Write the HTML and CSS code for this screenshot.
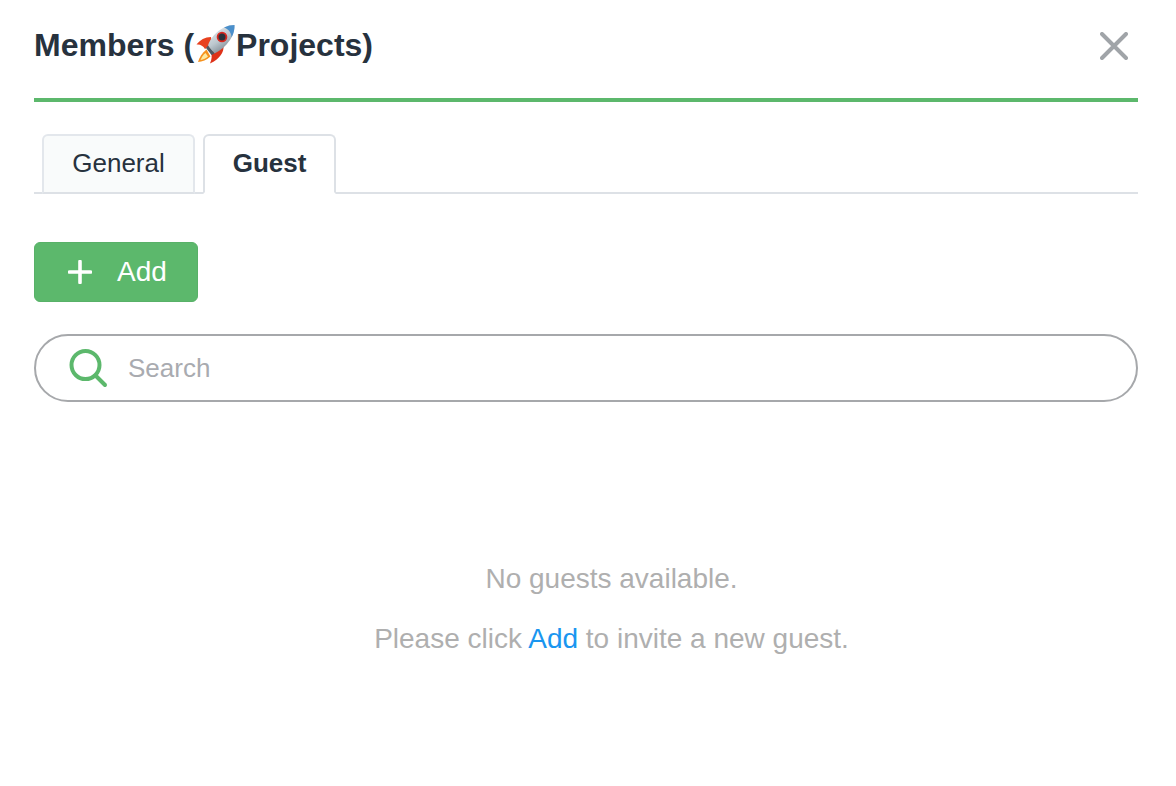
FILE: index.html
```html
<!DOCTYPE html>
<html lang="en">
<head>
<meta charset="utf-8">
<title>Members</title>
<link rel="stylesheet" href="styles.css">
</head>
<body>
<div class="modal">
  <header class="modal-header">
    <h1 class="modal-title">Members (<svg class="rocket" viewBox="0 0 42 40" aria-hidden="true">
      <defs>
        <linearGradient id="body" x1="0.2" y1="0" x2="0.8" y2="1">
          <stop offset="0" stop-color="#e6ebee"/>
          <stop offset="0.5" stop-color="#bcc7ce"/>
          <stop offset="1" stop-color="#66717b"/>
        </linearGradient>
      </defs>
      <path d="M17 13 C11 13 6 16 2.500 20.500 C6 20 9 21.500 11 25 L18 20Z" fill="#e8411f"/>
      <path d="M29.500 22 C30 28 26 35 16 39.500 C18 35 18 32 17 28Z" fill="#de3219"/>
      <path d="M12.500 25.500 C8 29 5.500 33 4 38 C8 37.500 13 36 16.500 32.500Z" fill="#f6921e"/>
      <path d="M11.500 29 C9 31 7.500 33.500 6.500 36 C9.500 35.500 12 34.500 14 32.500Z" fill="#fde9a0"/>
      <path d="M14 21.500 C16 15 22 7.500 30 3.500 C33.500 1.800 37 1 40.500 1 C40.700 5 39.500 11 36 16 C32 22 26.500 26.500 20.500 29.500Z" fill="url(#body)"/>
      <path d="M30 3.500 C33.500 1.800 37 1 40.500 1 C40.700 5 39.800 9.500 37.500 13.500 C37.500 9 35 5.500 30 3.500Z" fill="#4a8fcb"/>
      <circle cx="28" cy="13" r="5.300" fill="#d9281f"/>
      <circle cx="28" cy="13" r="3.500" fill="#2a333c"/>
      <path d="M14 21.500 L20.500 29.500 L17.500 31 L12 24Z" fill="#4f5962"/>
    </svg>Projects)</h1>
    <button class="close" type="button" aria-label="Close">
      <svg viewBox="0 0 28 28" class="close-icon"><path d="M2 2 L26 26 M26 2 L2 26"/></svg>
    </button>
  </header>

  <nav class="tabs">
    <a class="tab">General</a>
    <a class="tab tab-active">Guest</a>
  </nav>

  <button class="add-btn" type="button">
    <svg viewBox="0 0 24 24" class="plus"><path d="M12 1.500 V22.500 M1.500 12 H22.500"/></svg>
    <span>Add</span>
  </button>

  <label class="search">
    <svg viewBox="0 0 40 40" class="search-icon">
      <circle cx="17.500" cy="16.100" r="14"/>
      <path d="M27.500 26.500 L37 36"/>
    </svg>
    <span class="placeholder">Search</span>
  </label>

  <section class="empty">
    <p class="empty-line">No guests available.</p>
    <p class="empty-line">Please click <a class="link">Add</a> to invite a new guest.</p>
  </section>
</div>
</body>
</html>
```
FILE: styles.css
```css
* { box-sizing: border-box; }
html, body { margin: 0; height: 100%; background: #fff; }
body { font-family: "Liberation Sans", Arial, sans-serif; color: #27323e; overflow: hidden; }

.modal { padding: 0 38px 0 34px; }

.modal-header {
  height: 102px;
  border-bottom: 4px solid #5cb86c;
  display: flex;
  justify-content: space-between;
  padding-top: 24px;
}
.modal-title {
  margin: 0;
  font-size: 32px;
  line-height: 42px;
  font-weight: 700;
  display: flex;
  align-items: center;
  height: 42px;
}
.rocket { width: 42px; height: 40px; margin: -2px 0 0 0; }

.close {
  border: 0; padding: 0; background: none;
  width: 28px; height: 28px;
  margin: 8px 10px 0 0;
}
.close-icon { display: block; width: 28px; height: 28px; fill: none; stroke: #a0a4a8; stroke-width: 4; stroke-linecap: round; }

.tabs {
  margin-top: 32px;
  height: 60px;
  display: flex;
  gap: 8px;
  padding-left: 8px;
  border-bottom: 2px solid #dde1e6;
}
.tab {
  height: 60px;
  font-size: 26px;
  line-height: 54px;
  text-align: center;
  background: #f9fbfb;
  border: 2px solid #e3e7ec;
  border-bottom: 2px solid #dde1e6;
  border-radius: 6px 6px 0 0;
  width: 153px;
}
.tab-active {
  width: 133px;
  background: #fff;
  font-weight: 700;
  border-color: #dde1e6;
  border-bottom-color: #fff;
}

.add-btn {
  display: flex;
  align-items: center;
  margin-top: 48px;
  width: 164px;
  height: 60px;
  padding: 0 0 0 33px;
  background: #5cb86c;
  border: 1px solid #58b168;
  border-radius: 6px;
  color: #fff;
  font: 400 28px "Liberation Sans", Arial, sans-serif;
}
.plus { width: 24px; height: 24px; fill: none; stroke: #fff; stroke-width: 3.600; stroke-linecap: round; margin-right: 25px; }

.search {
  display: flex;
  align-items: center;
  margin-top: 32px;
  height: 68px;
  border: 2px solid #a6a8ab;
  border-radius: 34px;
  padding-left: 32px;
}
.search-icon { width: 40px; height: 40px; fill: none; stroke: #5cb86c; stroke-width: 4; stroke-linecap: round; margin: 2px 20px 0 0; }
.placeholder { font-size: 26px; color: #a9abb0; }

.empty { margin-top: 162px; text-align: center; padding-left: 51px; }
.empty-line { margin: 0 0 30px; font-size: 28px; line-height: 30px; color: #afafaf; }
.link { color: #1a96f0; }
```
